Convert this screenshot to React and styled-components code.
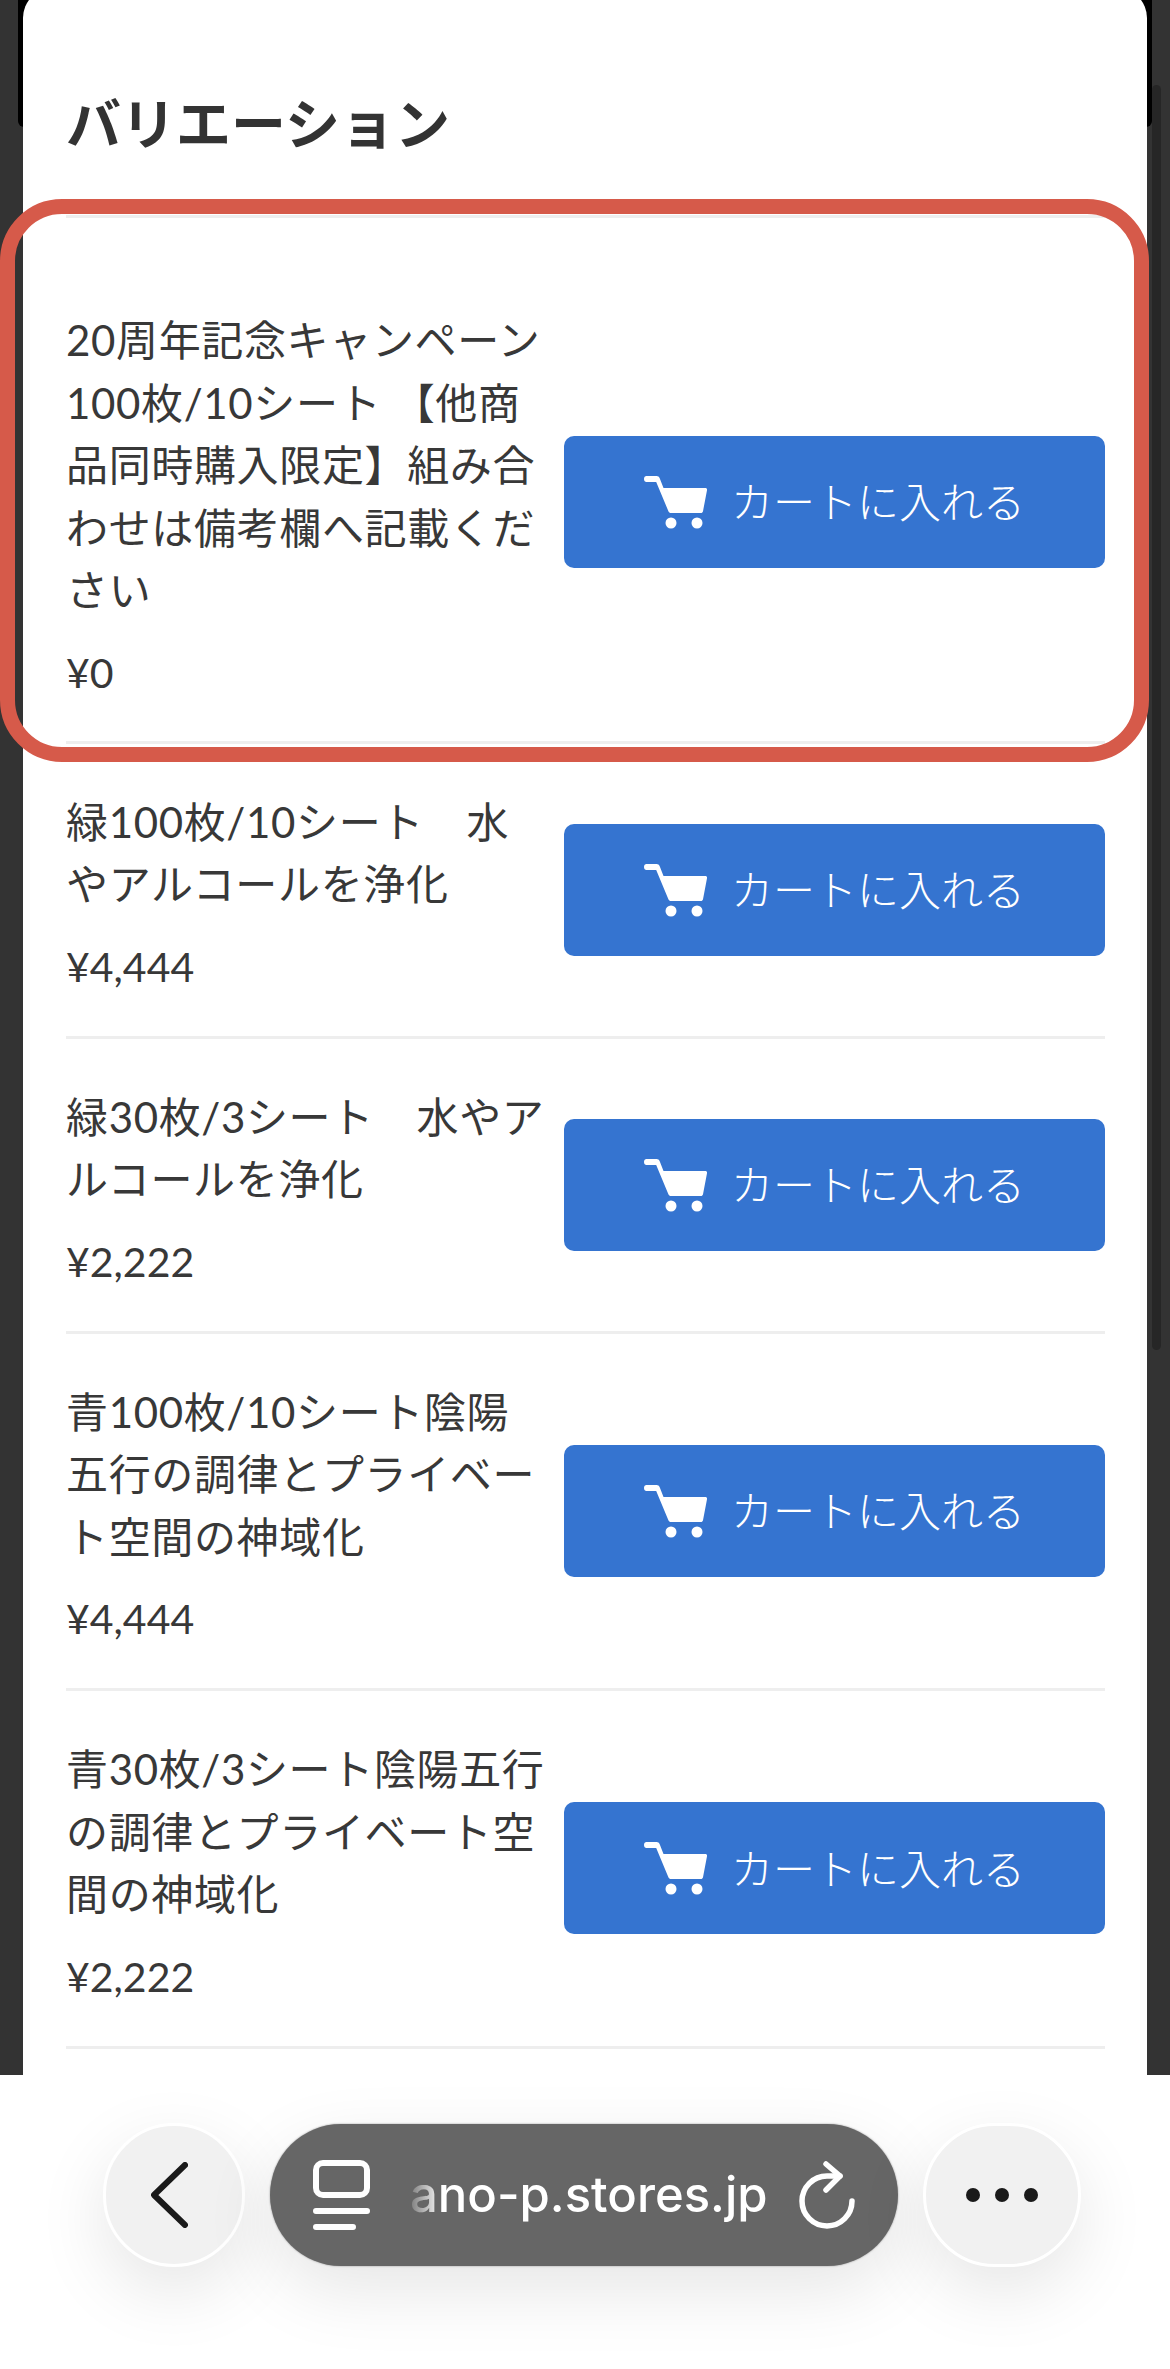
import React from "react";
import styled, { createGlobalStyle } from "styled-components";

const GlobalStyle = createGlobalStyle`
  html, body { margin: 0; padding: 0; background: #333; }
  body { font-family: Lato, "Noto Sans CJK JP", sans-serif; color: #333; }
  * { box-sizing: border-box; }
`;

const Page = styled.div`
  position: relative;
  width: 1170px;
  height: 2369px;
  overflow: hidden;
  display: flex;
  flex-direction: column;
  background: #333;
`;

const Sheet = styled.main`
  position: relative;
  z-index: 1;
  flex: 1;
  min-height: 0;
  margin: -12px 23px 0;
  background: #fff;
  border-radius: 30px 30px 0 0;
  overflow: hidden;
  padding: 101px 42px 0 43px;
`;

const EdgeStrip = styled.div`
  position: absolute;
  top: 0;
  width: 30px;
  height: 127px;
  background: #000;
  left: ${(p) => (p.$side === "left" ? "18px" : "1122px")};
  border-radius: ${(p) => (p.$side === "left" ? "0 0 0 6px" : "0 0 6px 0")};
`;

const Scrollbar = styled.div`
  position: absolute;
  left: 1152px;
  top: 85px;
  width: 9px;
  height: 1265px;
  border-radius: 5px;
  background: #262626;
`;

const Heading = styled.h2`
  margin: 0;
  font-size: 55px;
  line-height: 68px;
  font-weight: 700;
  color: #333;
`;

const List = styled.ul`
  list-style: none;
  margin: 58px 0 0;
  padding: 44px 0 0;
  border-top: 3px solid #eee;
`;

const Row = styled.li`
  display: flex;
  align-items: center;
  gap: 16px;
  padding: 38px 0;
  border-bottom: 3px solid #eee;

  &:first-child {
    padding-bottom: 37px;
  }
`;

const Info = styled.div`
  flex: 1;
  min-width: 0;
  padding-top: 9px;
`;

const Name = styled.div`
  font-size: 42px;
  line-height: 62.5px;
  letter-spacing: 0.65px;
  color: #383838;
`;

const Price = styled.div`
  margin-top: 20px;
  font-size: 41px;
  line-height: 62px;
  color: #383838;
`;

const CartButton = styled.button`
  flex: none;
  width: 541px;
  height: 132px;
  display: flex;
  align-items: center;
  justify-content: center;
  gap: 24px;
  border: 0;
  border-radius: 10px;
  background: #3574d0;
  color: #fff;
  font-family: Lato, "Noto Sans CJK JP", sans-serif;
  font-size: 42px;
  font-weight: 300;
`;

const ButtonLabel = styled.span`
  padding-bottom: 4px;
`;

const Highlight = styled.div`
  position: absolute;
  z-index: 2;
  left: 0;
  top: 199px;
  width: 1149px;
  height: 563px;
  border: 15px solid #d65a4a;
  border-radius: 62px;
  pointer-events: none;
`;

const Toolbar = styled.nav`
  position: relative;
  z-index: 3;
  flex: none;
  height: 294px;
  background: #fff;
  display: flex;
  gap: 25px;
  align-items: flex-start;
  padding: 48px 0 0 103px;
`;

const RoundButton = styled.div`
  flex: none;
  width: ${(p) => p.$w}px;
  height: 144px;
  border-radius: 72px;
  border: 3px solid #fff;
  background: #f1f1f1;
  display: flex;
  align-items: center;
  justify-content: center;
  box-shadow: 0 24px 70px rgba(0, 0, 0, 0.1);
`;

const AddressPill = styled.div`
  flex: none;
  width: 628px;
  height: 142px;
  margin-top: 1px;
  border-radius: 71px;
  background: #666;
  color: #fff;
  display: flex;
  align-items: center;
  padding: 0 43px;
  box-shadow: 0 24px 70px rgba(0, 0, 0, 0.1), 0 0 2px rgba(0, 0, 0, 0.4);
`;

const Url = styled.span`
  flex: 1;
  margin-left: 40px;
  font-family: Inter, sans-serif;
  font-size: 49px;
  font-weight: 500;
  line-height: 60px;
  white-space: nowrap;
  color: #fff;
  -webkit-mask-image: linear-gradient(90deg, rgba(0, 0, 0, 0.15), #000 32px);
  mask-image: linear-gradient(90deg, rgba(0, 0, 0, 0.15), #000 32px);
`;

const ChevronWrap = styled.span`
  display: flex;
  margin-right: 9px;
`;

const CartIcon = () => (
  <svg width="63" height="54" viewBox="0 0 63 54" fill="#fff" aria-hidden="true">
    <path d="M2.5 1h10c1.6 0 2.6.7 3.2 2.2L19.5 13h41.500c1.500 0 2.200.8 2 2.200l-4 21c-.3 1.200-1 1.800-2.200 1.800H27c-1.300 0-2.100-.6-2.600-1.800L12.200 7H2.500C1 7 0 5.800 0 4s1-3 2.500-3z" />
    <circle cx="27" cy="48" r="5.500" />
    <circle cx="53" cy="48" r="5.500" />
  </svg>
);

const ChevronIcon = () => (
  <svg width="37" height="66" viewBox="0 0 37 66" fill="none" stroke="#1a1a1a" strokeWidth="6" strokeLinecap="round" strokeLinejoin="round" aria-hidden="true">
    <path d="M34 3 3 33l31 30" />
  </svg>
);

const TabsIcon = () => (
  <svg width="57" height="70" viewBox="0 0 57 70" fill="none" stroke="#fff" strokeWidth="6" strokeLinecap="round" aria-hidden="true">
    <rect x="3" y="3" width="51" height="32" rx="7" />
    <path d="M3 51h51M3 67h37" />
  </svg>
);

const ReloadIcon = () => (
  <svg width="56" height="68" viewBox="0 0 56 68" fill="none" stroke="#fff" strokeWidth="5.500" strokeLinecap="round" strokeLinejoin="round" aria-hidden="true">
    <path d="M53 40a25 25 0 1 1-25-25h13" />
    <path d="M27 3l14 12-14 14" />
  </svg>
);

const DotsIcon = () => (
  <svg width="72" height="14" viewBox="0 0 72 14" fill="#1a1a1a" aria-hidden="true">
    <circle cx="7" cy="7" r="7" />
    <circle cx="36" cy="7" r="7" />
    <circle cx="65" cy="7" r="7" />
  </svg>
);

const variations = [
  { name: "20周年記念キャンペーン100枚/10シート 【他商品同時購入限定】組み合わせは備考欄へ記載ください", price: "¥0" },
  { name: "緑100枚/10シート　水やアルコールを浄化", price: "¥4,444" },
  { name: "緑30枚/3シート　水やアルコールを浄化", price: "¥2,222" },
  { name: "青100枚/10シート陰陽五行の調律とプライベート空間の神域化", price: "¥4,444" },
  { name: "青30枚/3シート陰陽五行の調律とプライベート空間の神域化", price: "¥2,222" },
];

export default function App() {
  return (
    <Page>
      <GlobalStyle />
      <EdgeStrip $side="left" />
      <EdgeStrip $side="right" />
      <Scrollbar />
      <Sheet>
        <Heading>バリエーション</Heading>
        <List>
          {variations.map((v) => (
            <Row key={v.name}>
              <Info>
                <Name>{v.name}</Name>
                <Price>{v.price}</Price>
              </Info>
              <CartButton type="button">
                <CartIcon />
                <ButtonLabel>カートに入れる</ButtonLabel>
              </CartButton>
            </Row>
          ))}
        </List>
      </Sheet>
      <Highlight />
      <Toolbar>
        <RoundButton $w={142}>
          <ChevronWrap>
            <ChevronIcon />
          </ChevronWrap>
        </RoundButton>
        <AddressPill>
          <TabsIcon />
          <Url>ano-p.stores.jp</Url>
          <ReloadIcon />
        </AddressPill>
        <RoundButton $w={158}>
          <DotsIcon />
        </RoundButton>
      </Toolbar>
    </Page>
  );
}
